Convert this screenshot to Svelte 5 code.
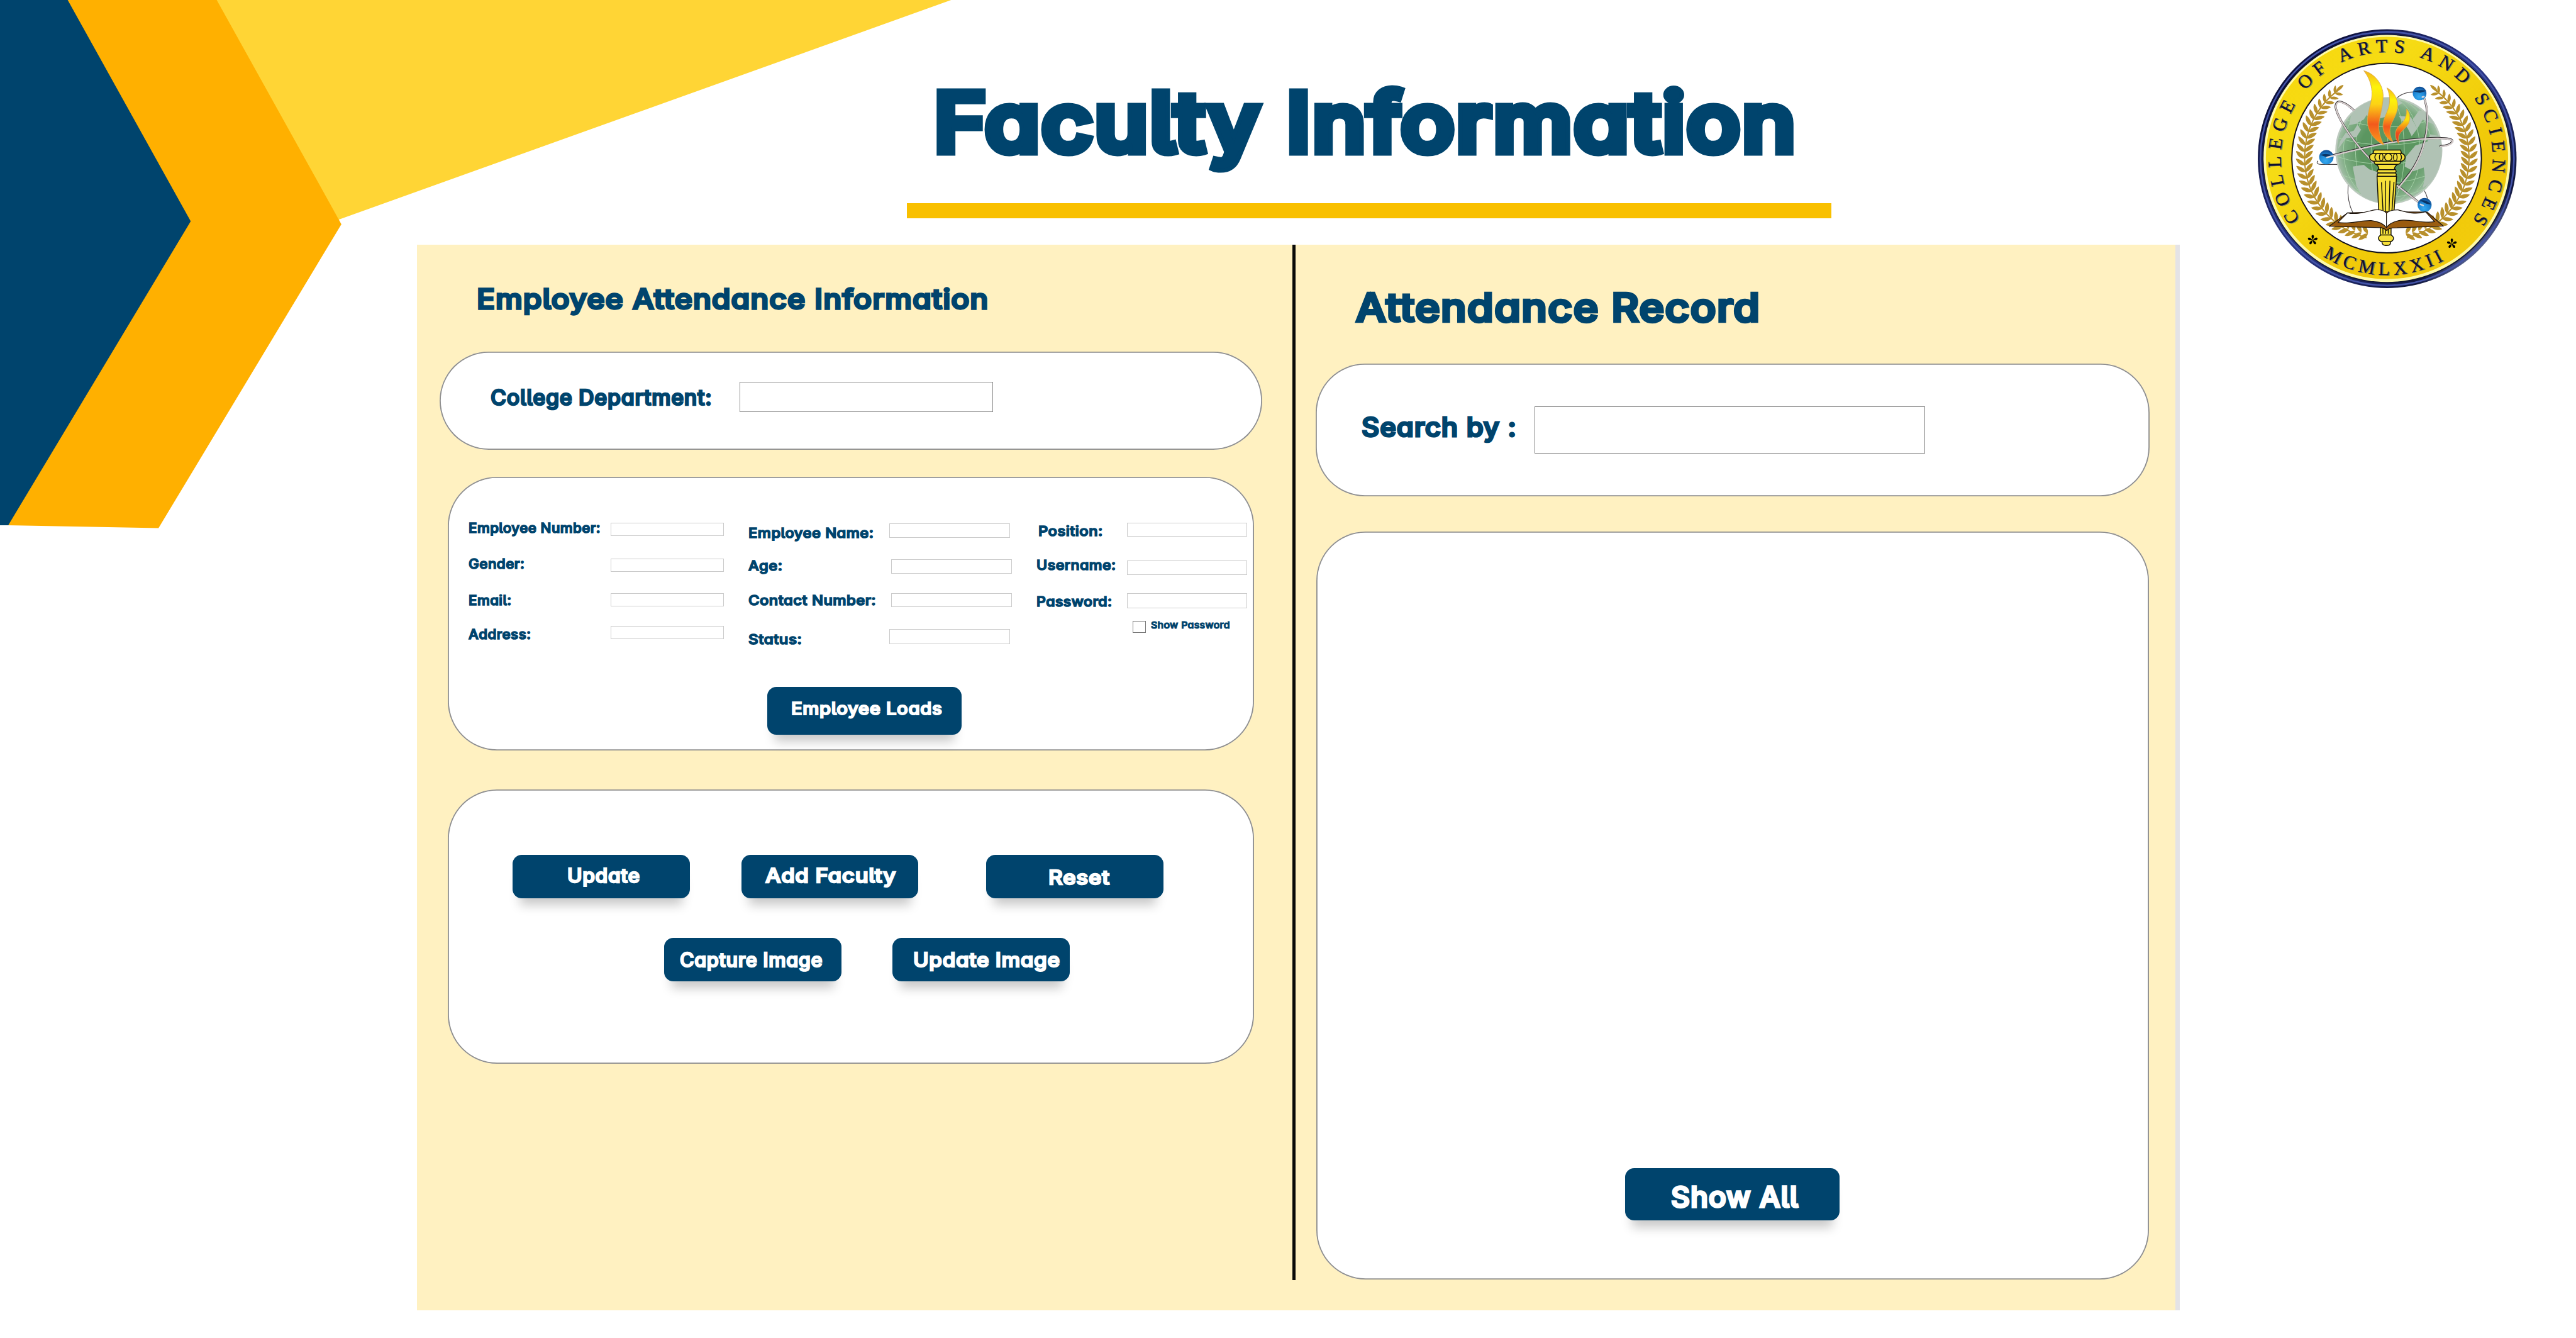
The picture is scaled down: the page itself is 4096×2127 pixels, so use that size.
<script>
  // Scales a text run horizontally so that it fills the width of its slot.
  function fit(node) {
    const slot = node.parentElement.clientWidth;
    const natural = node.offsetWidth;
    if (natural) node.style.transform = `scaleX(${slot / natural})`;
  }

  // Turns absolute tops into the gaps between stacked items (1rem = 100 units).
  const stack = (items, start, height) =>
    items.map((item, i) => {
      const prev = i === 0 ? start : items[i - 1].y + (items[i - 1].h ?? height);
      return { ...item, gap: (item.y - prev) / 100 };
    });

  const LINE = 33.5;
  const CARD_TOP = 1155;

  const columns = [
    {
      labels: stack(
        [
          { t: 'Employee Number:', w: 320, y: 1261 },
          { t: 'Gender:', w: 135, y: 1349 },
          { t: 'Email:', w: 104, y: 1436 },
          { t: 'Address:', w: 151, y: 1519 }
        ],
        CARD_TOP,
        LINE
      ),
      boxes: stack(
        [
          { y: 1266, h: 32.5, w: 273 },
          { y: 1353, h: 32.5, w: 273 },
          { y: 1436, h: 33, w: 273 },
          { y: 1516, h: 32, w: 273 }
        ],
        CARD_TOP
      )
    },
    {
      labels: stack(
        [
          { t: 'Employee Name:', w: 303, y: 1274 },
          { t: 'Age:', w: 82, y: 1353.5 },
          { t: 'Contact Number:', w: 310, y: 1436.5 },
          { t: 'Status:', w: 130, y: 1531.5 }
        ],
        CARD_TOP,
        LINE
      ),
      boxes: stack(
        [
          { y: 1267, h: 36, w: 293 },
          { y: 1354, h: 36, w: 293, shift: true },
          { y: 1437, h: 33, w: 293, shift: true },
          { y: 1524, h: 36, w: 293 }
        ],
        CARD_TOP
      )
    },
    {
      labels: stack(
        [
          { t: 'Position:', w: 157, y: 1269, shift: true },
          { t: 'Username:', w: 193, y: 1352 },
          { t: 'Password:', w: 185, y: 1439.5 }
        ],
        CARD_TOP,
        LINE
      ),
      boxes: stack(
        [
          { y: 1266, h: 33, w: 291 },
          { y: 1357, h: 36, w: 291 },
          { y: 1437, h: 36, w: 291 }
        ],
        CARD_TOP
      ),
      toggle: true
    }
  ];

  // Laurel leaves: pairs along an arc around the seal's centre.
  const leaves = [];
  for (let a = 104; a <= 233; a += 4.7) {
    const rad = (a * Math.PI) / 180;
    const r = a < 125 ? 425 + (a - 104) : 446;
    const x = 765 + r * Math.cos(rad);
    const y = 765 + r * Math.sin(rad);
    const size = a > 205 ? 1 - (a - 205) / 90 : 1;
    leaves.push({ x, y, rot: a + 90 - 48, size }, { x, y, rot: a + 90 + 48, size });
  }
</script>

{#snippet line(text, width, cls)}
  <span class="line {cls}" style:width="{width / 100}rem"><span class="ink" use:fit>{text}</span></span>
{/snippet}

{#snippet laurel()}
  <path class="stem" d="M655 1200 A446 446 0 0 1 319 765 A446 446 0 0 1 500 402" />
  {#each leaves as leaf}
    <path
      class="leaf"
      d="M0 0 C14 -17 44 -16 62 0 C44 11 16 13 0 0 Z"
      transform="translate({leaf.x} {leaf.y}) rotate({leaf.rot}) scale({leaf.size})"
    />
  {/each}
  <path class="leaf" d="M0 0 C14 -13 40 -12 54 0 C40 9 16 10 0 0 Z" transform="translate(490 408) rotate(-42)" />
{/snippet}

<div class="page">
  <svg class="ribbon" viewBox="0 0 2320 1300" aria-hidden="true">
    <polygon points="520,0 2304,0 820,532" fill="#ffd535" />
    <polygon points="160,0 525,0 827,543 384,1279 18,1272" fill="#ffb000" />
    <polygon points="0,0 164,0 462,536 20,1272 0,1272" fill="#00446d" />
  </svg>

  <header>
    <div class="title">
      <h1>{@render line('Faculty Information', 2092, 'hero')}</h1>
      <div class="rule"></div>
    </div>

    <svg class="seal" viewBox="0 0 1568 1568" role="img" aria-label="College of Arts and Sciences seal">
      <defs>
        <linearGradient id="rim" x1="0" y1="0" x2="1" y2="1">
          <stop offset="0" stop-color="#26307e" />
          <stop offset=".16" stop-color="#0b0e38" />
          <stop offset=".5" stop-color="#2b3788" />
          <stop offset=".8" stop-color="#10163f" />
          <stop offset=".9" stop-color="#8fa0d8" />
          <stop offset="1" stop-color="#1a2360" />
        </linearGradient>
        <linearGradient id="gold" x1="0" y1="0" x2="1" y2="1">
          <stop offset="0" stop-color="#f7d60c" />
          <stop offset=".3" stop-color="#f6dc14" />
          <stop offset=".7" stop-color="#f0c808" />
          <stop offset="1" stop-color="#f4cf10" />
        </linearGradient>
        <radialGradient id="globe">
          <stop offset=".55" stop-color="#5b9660" />
          <stop offset=".85" stop-color="#7dac82" />
          <stop offset="1" stop-color="#a5bfa9" />
        </radialGradient>
        <linearGradient id="flame" x1="0" y1="0" x2="0" y2="1">
          <stop offset="0" stop-color="#f3b51c" />
          <stop offset=".22" stop-color="#fdf30a" />
          <stop offset=".45" stop-color="#fcd315" />
          <stop offset=".72" stop-color="#f2591c" />
          <stop offset="1" stop-color="#f9a01b" />
        </linearGradient>
        <linearGradient id="flameRed" x1="0" y1="0" x2="0" y2="1">
          <stop offset="0" stop-color="#f6c81b" />
          <stop offset=".3" stop-color="#fbe40d" />
          <stop offset=".7" stop-color="#ee4c1e" />
          <stop offset="1" stop-color="#e8401f" />
        </linearGradient>
        <radialGradient id="ball" cx=".45" cy=".75" r=".7">
          <stop offset="0" stop-color="#35aaf0" />
          <stop offset=".6" stop-color="#1e86d4" />
          <stop offset="1" stop-color="#0f4f98" />
        </radialGradient>
        <clipPath id="disc"><circle cx="776" cy="728" r="286" /></clipPath>
        <path id="arcTop" d="M294 1100 A575 575 0 1 1 1229 1108" />
        <path id="arcBottom" d="M420 1301 A633 633 0 0 0 1086 1317" />
        <g id="star">
          {#each [0, 72, 144, 216, 288] as turn}
            <path d="M0 0 C-3 -9 -8 -16 -6 -22 C-4 -29 4 -29 6 -22 C8 -16 3 -9 0 0 Z" transform="rotate({turn})" />
          {/each}
        </g>
      </defs>

      <circle cx="767" cy="772" r="702" fill="url(#rim)" />
      <circle cx="767" cy="772" r="688" fill="none" stroke="#4454a8" stroke-width="9" />
      <circle cx="767" cy="772" r="675" fill="#10142f" />
      <circle cx="766" cy="771" r="670" fill="#fdf9a8" />
      <circle cx="766" cy="768" r="657" fill="url(#gold)" />
      <circle cx="764" cy="769" r="519" fill="#c9a60a" />
      <circle cx="764" cy="769" r="514" fill="#fff" stroke="#0e0e1a" stroke-width="6" />

      <g class="motto shade" transform="translate(5 2)" aria-hidden="true">
        <text><textPath href="#arcTop" textLength="2520">COLLEGE OF ARTS AND SCIENCES</textPath></text>
        <text><textPath href="#arcBottom" textLength="688">MCMLXXII</textPath></text>
      </g>
      <g class="motto">
        <text><textPath href="#arcTop" textLength="2520">COLLEGE OF ARTS AND SCIENCES</textPath></text>
        <text><textPath href="#arcBottom" textLength="688">MCMLXXII</textPath></text>
      </g>
      <use href="#star" x="363" y="1213" />
      <use href="#star" x="1118" y="1233" />

      {@render laurel()}
      <g transform="translate(1530 0) scale(-1 1)">{@render laurel()}</g>

      <g class="orbit back">
        <path d="M820 442 C850 416 880 410 912 410" />
        <path d="M498 803 L410 803 C390 803 380 796 392 784" />
        <path d="M555 915 C550 980 562 1030 582 1068" />
        <path d="M965 940 C975 955 983 975 987 995" />
      </g>

      <circle cx="776" cy="728" r="286" fill="url(#globe)" stroke="#bcc9be" stroke-width="9" />
      <g clip-path="url(#disc)">
        <g class="grid">
          <ellipse cx="770" cy="728" rx="90" ry="290" />
          <ellipse cx="770" cy="728" rx="175" ry="290" />
          <ellipse cx="770" cy="728" rx="240" ry="290" />
          <path d="M770 440 V1015 M540 560 Q770 640 1010 560 M500 660 Q770 740 1055 650 M490 760 Q770 850 1065 745 M520 860 Q770 960 1040 840 M580 940 Q770 1030 980 930" />
        </g>
        <g class="land">
          <path d="M500 720 L545 660 L600 655 L625 615 L600 580 L640 560 L665 520 L640 490 L600 500 L570 540 L560 590 L610 580 L585 620 L540 635 L510 680 Z" />
          <path d="M600 470 L680 440 L800 436 L850 470 L800 500 L780 540 L700 560 L660 540 Z" />
          <path d="M580 815 L640 805 L670 830 L730 850 L745 900 L720 950 L735 1020 L640 990 L600 920 Z" />
          <path d="M905 560 L940 510 L990 520 L1030 570 L1055 650 L1000 640 L985 680 L920 700 L870 760 L862 815 L910 840 L965 820 L972 870 L960 930 L1040 880 L1075 740 L1050 600 L960 560 L930 610 Z" />
          <path d="M830 540 L895 545 L930 610 L900 650 L880 610 Z" />
        </g>
      </g>

      <g class="orbit-line">
        {#each ['shadow', 'tube'] as layer}
          <g class={layer}>
            <path d="M585 508 C540 466 488 440 487 492 C500 560 590 690 690 790" />
            <path d="M820 915 L960 1026" />
            <path d="M965 436 C1005 540 985 720 890 850 L826 930" />
            <path d="M460 756 C600 722 760 676 950 664 C1060 656 1130 660 1120 680 C1112 694 1085 702 1056 704" />
          </g>
        {/each}
      </g>

      <g class="ball">
        <circle cx="437" cy="764" r="39" />
        <circle cx="943" cy="418" r="37" />
        <circle cx="970" cy="1023" r="38" />
        <path d="M404 752 Q440 738 474 758 L440 764 Z M910 408 Q945 394 980 404 L945 415 Z M942 1000 Q975 990 1006 1020 Q975 1020 960 1006 Z" />
        <path class="glint" d="M440 765 L474 757 M958 438 L966 436 M948 1020 L962 1026" />
      </g>

      <path class="flame" fill="url(#flame)" d="M640 295 C700 310 745 370 745 430 C745 500 718 560 722 610 C726 650 738 675 750 698 C690 670 650 610 662 540 C672 480 692 440 682 390 C676 350 660 320 640 295 Z" />
      <path class="flame" fill="url(#flame)" d="M766 388 C800 405 826 445 824 490 C822 540 780 580 782 620 C783 650 790 665 798 680 C755 660 735 615 748 565 C760 525 780 500 780 455 C780 425 774 405 766 388 Z" />
      <path class="flame" fill="url(#flameRed)" d="M872 503 C890 520 895 550 884 578 C872 606 835 625 830 650 C828 668 829 680 830 690 C808 665 805 625 826 600 C848 578 875 560 872 503 Z" />

      <g class="torch">
        <path d="M730 1145 V1195 H788 V1145 Z" />
        <path d="M744 1150 V1180 M758 1150 V1180 M773 1150 V1180" fill="none" />
        <path d="M738 1215 C738 1238 745 1243 765 1243 C784 1243 786 1235 786 1215 Z" />
        <path d="M733 1186 H788 C806 1196 806 1212 788 1222 H733 C716 1212 714 1196 733 1186 Z" />
        <path d="M712 868 L722 1075 H803 L818 868 Z" />
        <path d="M736 900 L745 1065 M757 892 V1068 M782 892 L777 1068 M804 898 L792 1065" fill="none" />
        <path d="M718 830 H812 L816 842 L810 850 H720 L712 842 Z" />
        <path d="M718 850 H812 Q822 860 812 868 H716 Q708 860 718 850 Z" />
        <path d="M708 803 H822 Q806 815 806 832 H722 Q722 812 708 803 Z" />
        <path d="M695 785 H838 V797 Q832 803 822 803 H706 Q696 800 695 785 Z" />
        <path d="M696 725 H840 L845 745 H690 Z" />
        <path d="M690 744 C665 750 665 775 690 786 H846 C872 775 868 750 846 744 Z" />
        <circle cx="773" cy="764" r="20" />
        <ellipse cx="735" cy="764" rx="10" ry="19" />
        <ellipse cx="811" cy="764" rx="10" ry="19" />
        <path d="M708 746 Q692 764 708 782 M838 746 Q852 764 838 782" fill="none" />
      </g>

      <g class="book">
        <path fill="#9a5c10" d="M452 1139 L552 1066 L765 1060 L985 1062 L1072 1138 L795 1148 Q775 1150 765 1162 Q752 1150 735 1146 Z" />
        <path fill="#fff" d="M500 1118 L552 1066 C600 1078 650 1060 700 1050 C735 1047 755 1058 763 1068 C775 1055 800 1050 825 1050 C870 1062 920 1078 975 1060 L1024 1114 C960 1125 900 1100 840 1106 C805 1112 778 1125 763 1146 C745 1122 715 1112 680 1108 C620 1106 560 1130 500 1118 Z" />
        <path fill="none" d="M763 1068 V1142" />
      </g>
    </svg>
  </header>

  <main>
    <section class="info">
      <h2>{@render line('Employee Attendance Information', 1240, 'h-left')}</h2>

      <div class="card department">
        {@render line('College Department:', 537, 'dept-label')}
        <input class="dept-input" aria-label="College Department" />
      </div>

      <div class="card details">
        <div class="fields">
          {#each columns as col}
            <div class="stack">
              {#each col.labels as l}
                <label class:nudge={l.shift} style:margin-top="{l.gap}rem">{@render line(l.t, l.w, 'small')}</label>
              {/each}
            </div>
            <div class="stack">
              {#each col.boxes as b}
                <input
                  class="field"
                  class:shift={b.shift}
                  style:margin-top="{b.gap}rem"
                  style:width="{b.w / 100}rem"
                  style:height="{b.h / 100}rem"
                />
              {/each}
              {#if col.toggle}
                <label class="toggle">
                  <span class="check"></span>
                  {@render line('Show Password', 192, 'tiny')}
                </label>
              {/if}
            </div>
          {/each}
        </div>
        <button class="loads">{@render line('Employee Loads', 366, 'b-loads')}</button>
      </div>

      <div class="card actions">
        <div class="row first">
          <button class="update">{@render line('Update', 176, 'b-36')}</button>
          <button class="add">{@render line('Add Faculty', 317, 'b-37')}</button>
          <button class="reset">{@render line('Reset', 149, 'b-37')}</button>
        </div>
        <div class="row second">
          <button class="capture">{@render line('Capture Image', 346, 'b-36')}</button>
          <button class="image">{@render line('Update Image', 356, 'b-37')}</button>
        </div>
      </div>
    </section>

    <div class="divider"></div>

    <section class="record">
      <h2>{@render line('Attendance Record', 980, 'h-right')}</h2>
      <div class="card search">
        {@render line('Search by :', 377, 'search-label')}
        <input class="search-input" aria-label="Search by" />
      </div>
      <div class="card results">
        <button class="all">{@render line('Show All', 310, 'b-all')}</button>
      </div>
    </section>
  </main>
</div>

<style>
  :global(html) {
    font-size: calc(100vw / 62.4);
  }
  :global(body) {
    background: #fff;
    overflow: hidden;
  }

  .page {
    position: relative;
    width: 62.4rem;
    height: 32.4rem;
    overflow: hidden;
    background: #fff;
    color: #00446d;
    font-family: Inter, 'Open Sans', sans-serif;
    font-weight: 500;
  }

  .ribbon {
    position: absolute;
    left: 0;
    top: 0;
    width: 23.2rem;
    height: 13rem;
  }

  h1,
  h2 {
    margin: 0;
    font: inherit;
  }

  .line {
    display: block;
    flex: none;
    line-height: 1;
    white-space: nowrap;
    margin-left: -0.03em;
  }
  .ink {
    display: block;
    width: max-content;
    transform-origin: 0 50%;
    font-feature-settings: 'cv11', 'cv05';
    letter-spacing: 0.02em;
    -webkit-text-stroke: 0.075em currentColor;
    paint-order: stroke;
    stroke-linejoin: round;
  }

  .hero { font-size: 1.97rem; }
  .hero .ink { -webkit-text-stroke-width: 0.1em; }
  .h-left { font-size: 0.67rem; }
  .h-right { font-size: 0.95rem; }
  .dept-label { font-size: 0.51rem; }
  .search-label { font-size: 0.635rem; }
  .small { font-size: 0.335rem; }
  .tiny { font-size: 0.225rem; }
  .b-loads { font-size: 0.41rem; }
  .b-36 { font-size: 0.465rem; }
  .b-37 { font-size: 0.48rem; }
  .b-all { font-size: 0.69rem; }

  header {
    position: relative;
    display: flex;
    height: 5.92rem;
    padding-left: 21.97rem;
    box-sizing: border-box;
  }
  .title {
    width: 22.39rem;
    flex: none;
    padding-top: 1.98rem;
  }
  .title h1 {
    margin-left: 0.71rem;
    height: 2.94rem;
  }
  .rule {
    height: 0.365rem;
    background: #f9c000;
  }
  .seal {
    flex: none;
    width: 7rem;
    height: 7rem;
    margin: 0.4rem 0 0 10.04rem;
  }

  main {
    display: grid;
    grid-template-columns: 21.21rem 0.07rem 1fr;
    width: 42.7rem;
    height: 25.82rem;
    margin-left: 10.1rem;
    box-sizing: border-box;
    border-right: 0.12rem solid #e4e3e6;
    background: #fff1c1;
  }
  .divider {
    height: 25.08rem;
    background: #0a0a08;
  }

  .card {
    box-sizing: border-box;
    background: #fff;
    border-radius: 1.19rem;
    box-shadow: inset 0 0 0 0.028rem #8f8f8f;
  }

  input,
  .check {
    display: block;
    flex: none;
    box-sizing: border-box;
    margin: 0;
    padding: 0;
    background: #fff;
    border: 0.03rem solid #8a8a8a;
    border-radius: 0;
  }

  button {
    display: flex;
    flex: none;
    box-sizing: border-box;
    width: 4.29rem;
    height: 1.06rem;
    margin: 0;
    padding: 0;
    border: 0;
    border-radius: 0.22rem;
    background: #00446d;
    color: #fff;
    font: inherit;
    align-items: flex-start;
    box-shadow: 0 0.34rem 0.26rem -0.18rem rgba(0, 0, 0, 0.22);
  }

  .info h2 { padding: 0.983rem 0 0 1.47rem; }

  .department {
    display: flex;
    width: 19.92rem;
    height: 2.38rem;
    margin: 0.942rem 0 0 0.55rem;
    padding-left: 1.25rem;
  }
  .dept-label { margin-top: 0.87rem; }
  .dept-input {
    width: 6.14rem;
    height: 0.73rem;
    margin: 0.74rem 0 0 0.655rem;
  }

  .details {
    width: 19.52rem;
    height: 6.62rem;
    margin: 0.655rem 0 0 0.75rem;
  }
  .fields {
    display: grid;
    grid-template-columns: 3.44rem 3.345rem 3.395rem 3.58rem 2.18rem 2.9rem;
    height: 5.09rem;
    padding-left: 0.51rem;
  }
  .stack label { display: block; }
  .stack .nudge { margin-left: 0.04rem; }
  .field { border-color: #cbcbcb; }
  .shift { margin-left: 0.045rem; }
  .stack .toggle {
    display: flex;
    gap: 0.13rem;
    margin: 0.3rem 0 0 0.14rem;
  }
  .check {
    width: 0.32rem;
    height: 0.3rem;
    border-color: #777;
  }
  .tiny { margin-top: 0.01rem; }

  .loads {
    width: 4.71rem;
    height: 1.16rem;
    margin-left: 7.73rem;
    padding: 0.316rem 0 0 0.6rem;
  }

  .actions {
    width: 19.52rem;
    height: 6.645rem;
    margin: 0.95rem 0 0 0.75rem;
    padding-top: 1.58rem;
  }
  .row { display: flex; }
  .first { padding-left: 1.567rem; }
  .second { padding: 0.95rem 0 0 5.24rem; }
  .update { padding: 0.285rem 0 0 1.34rem; }
  .add {
    margin-left: 1.25rem;
    padding: 0.265rem 0 0 0.6rem;
  }
  .reset {
    margin-left: 1.64rem;
    padding: 0.305rem 0 0 1.53rem;
  }
  .capture { padding: 0.31rem 0 0 0.39rem; }
  .image {
    margin-left: 1.24rem;
    padding: 0.295rem 0 0 0.52rem;
  }

  .record h2 { padding: 1.058rem 0 0 1.49rem; }
  .search {
    display: flex;
    width: 20.2rem;
    height: 3.21rem;
    margin: 0.88rem 0 0 0.49rem;
    padding-left: 1.126rem;
  }
  .search-label { margin-top: 1.237rem; }
  .search-input {
    width: 9.46rem;
    height: 1.14rem;
    margin: 1.037rem 0 0 0.42rem;
    border-color: #808080;
  }
  .results {
    width: 20.17rem;
    height: 18.11rem;
    margin: 0.86rem 0 0 0.51rem;
    padding: 15.415rem 0 0 7.47rem;
  }
  .all {
    width: 5.2rem;
    height: 1.27rem;
    padding: 0.355rem 0 0 1.14rem;
  }

  /* Seal artwork */
  .motto {
    font-family: 'Liberation Serif', serif;
    font-size: 102px;
    font-weight: 400;
    fill: #10112c;
    stroke: #10112c;
    stroke-width: 1;
  }
  .shade {
    fill: #85866f;
    stroke: #85866f;
  }
  .stem {
    fill: none;
    stroke: #b8902c;
    stroke-width: 7;
  }
  .leaf { fill: #b8902c; }
  .grid {
    fill: none;
    stroke: #a9d3aa;
    stroke-width: 3;
  }
  .land { fill: #b0c2b4; }
  .orbit path {
    fill: none;
    stroke: #4a4648;
    stroke-width: 4;
  }
  .orbit-line path {
    fill: none;
    stroke-linecap: round;
  }
  .shadow path {
    stroke: #2e2a2c;
    stroke-width: 11;
  }
  .tube path {
    stroke: #d6cdcd;
    stroke-width: 8;
    transform: translate(1px, 2px);
  }
  .ball circle { fill: url(#ball); }
  .ball path { fill: #0a3566; }
  .ball .glint {
    stroke: #d9d9de;
    stroke-width: 9;
    stroke-linecap: round;
  }
  .flame {
    stroke: #d9a64a;
    stroke-width: 3;
  }
  .torch path,
  .torch circle,
  .torch ellipse {
    stroke: #15130a;
    stroke-width: 5;
    stroke-linejoin: round;
  }
  .torch { fill: #f6e03a; }
  .book path {
    stroke: #1a120c;
    stroke-width: 4;
    stroke-linejoin: round;
  }
</style>
